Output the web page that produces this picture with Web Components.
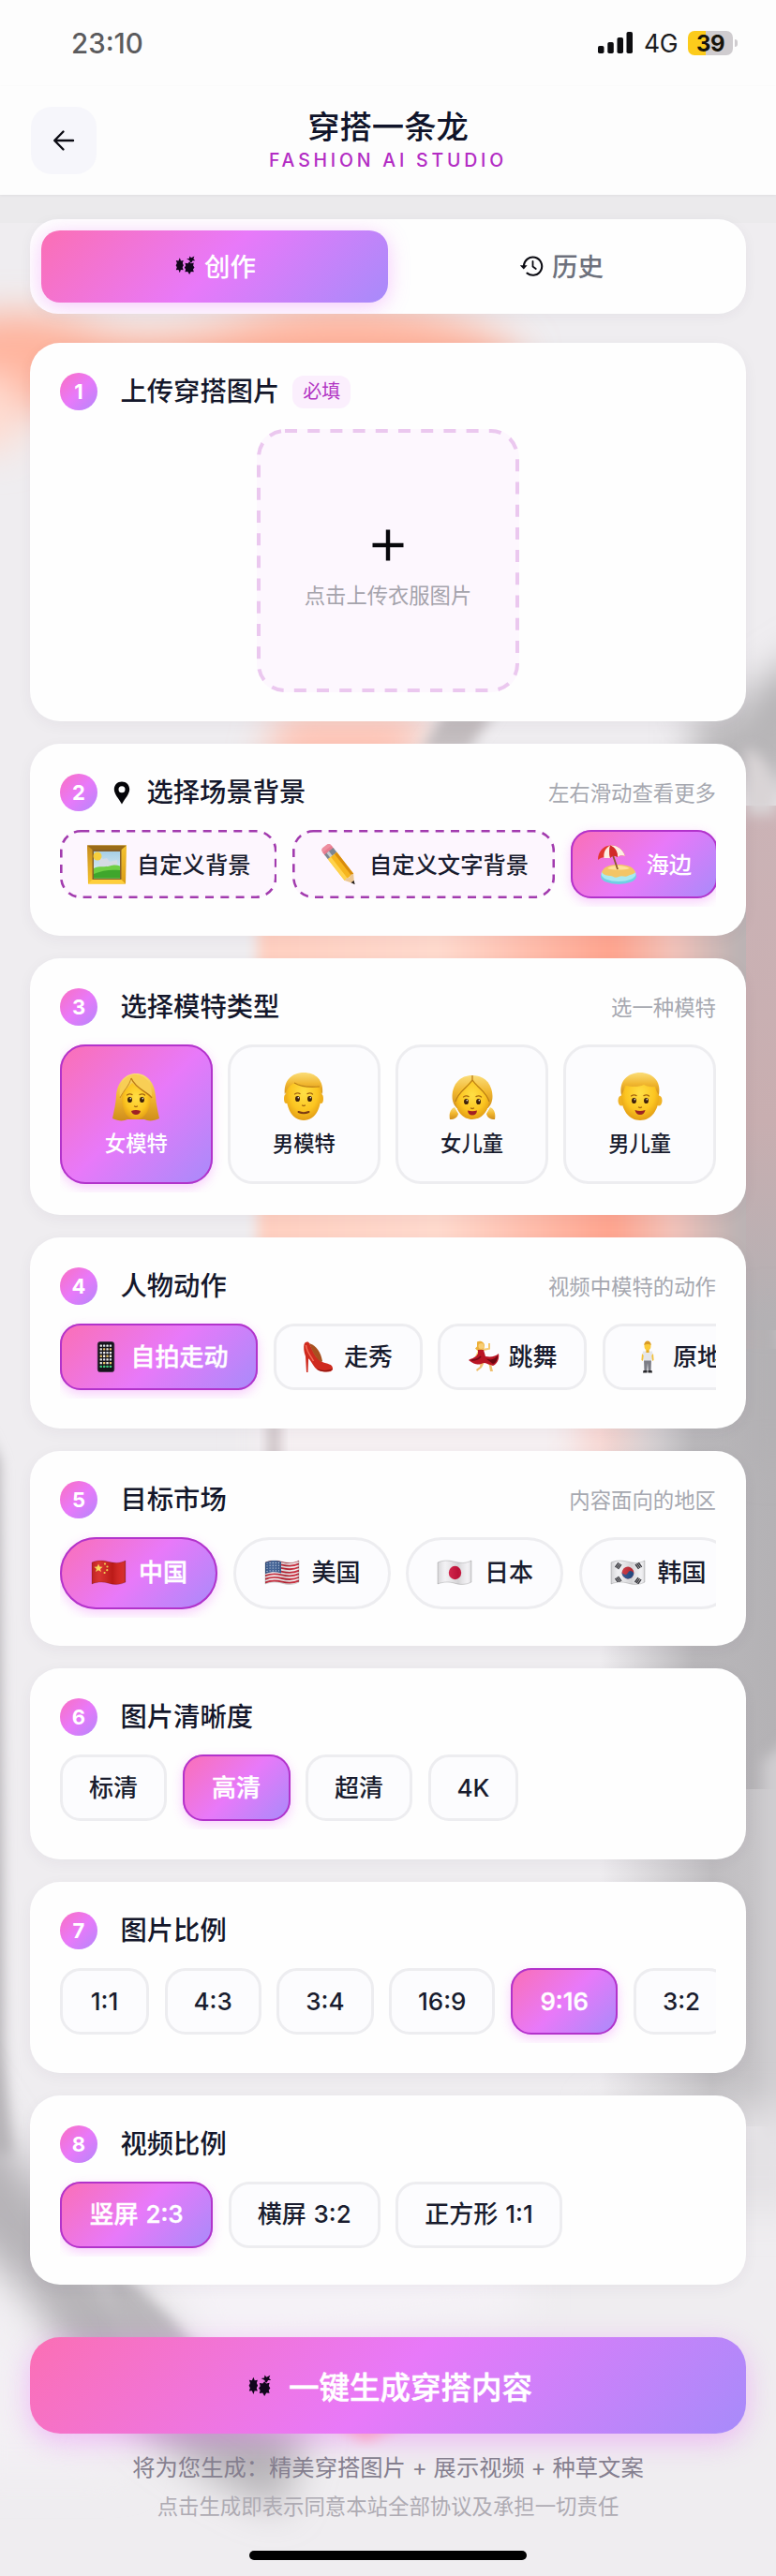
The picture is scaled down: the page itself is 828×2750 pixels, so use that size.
<!DOCTYPE html>
<html lang="zh-CN">
<head>
<meta charset="utf-8">
<title>穿搭一条龙</title>
<style>
html, body { margin: 0; padding: 0; }
body {
  width: 828px;
  height: 2750px;
  overflow: hidden;
  background: #efedf0;
  color: #14162b;
  font-family: Inter, "Noto Sans CJK SC", sans-serif;
  --grad: linear-gradient(135deg, #fb6fb4 0%, #e879f9 50%, #a78bfa 100%);
}
</style>
</head>
<body>

<studio-page>
  <soft-backdrop slot="backdrop"></soft-backdrop>

  <status-bar time="23:10" network="4G" battery="39"></status-bar>
  <page-header subtitle="FASHION AI STUDIO">穿搭一条龙</page-header>

  <main-tabs>
    <main-tab icon="sparkle" active>创作</main-tab>
    <main-tab icon="history">历史</main-tab>
  </main-tabs>

  <step-list>
    <step-card no="1" heading="上传穿搭图片" tag="必填" style="height:404px">
      <upload-box>点击上传衣服图片</upload-box>
    </step-card>

    <step-card no="2" icon="pin" heading="选择场景背景" hint="左右滑动查看更多" style="height:205px">
      <option-chip kind="scene" custom emoji="frame">自定义背景</option-chip>
      <option-chip kind="scene" custom emoji="pencil">自定义文字背景</option-chip>
      <option-chip kind="scene" emoji="beach" active>海边</option-chip>
    </step-card>

    <step-card no="3" heading="选择模特类型" hint="选一种模特" style="height:274px">
      <option-chip kind="tile" emoji="woman" active>女模特</option-chip>
      <option-chip kind="tile" emoji="man">男模特</option-chip>
      <option-chip kind="tile" emoji="girl">女儿童</option-chip>
      <option-chip kind="tile" emoji="boy">男儿童</option-chip>
    </step-card>

    <step-card no="4" heading="人物动作" hint="视频中模特的动作" style="height:203.5px">
      <option-chip emoji="phone" active>自拍走动</option-chip>
      <option-chip emoji="heel">走秀</option-chip>
      <option-chip emoji="dancer">跳舞</option-chip>
      <option-chip emoji="standing">原地</option-chip>
    </step-card>

    <step-card no="5" heading="目标市场" hint="内容面向的地区" style="height:208.5px">
      <option-chip kind="pill" emoji="cn" active>中国</option-chip>
      <option-chip kind="pill" emoji="us">美国</option-chip>
      <option-chip kind="pill" emoji="jp">日本</option-chip>
      <option-chip kind="pill" emoji="kr">韩国</option-chip>
    </step-card>

    <step-card no="6" heading="图片清晰度" style="height:204px">
      <option-chip>标清</option-chip>
      <option-chip active>高清</option-chip>
      <option-chip>超清</option-chip>
      <option-chip>4K</option-chip>
    </step-card>

    <step-card no="7" heading="图片比例" style="height:203.5px">
      <option-chip>1:1</option-chip>
      <option-chip>4:3</option-chip>
      <option-chip>3:4</option-chip>
      <option-chip>16:9</option-chip>
      <option-chip active>9:16</option-chip>
      <option-chip>3:2</option-chip>
    </step-card>

    <step-card no="8" heading="视频比例" style="height:202px">
      <option-chip active>竖屏 2:3</option-chip>
      <option-chip>横屏 3:2</option-chip>
      <option-chip>正方形 1:1</option-chip>
    </step-card>
  </step-list>

  <generate-bar>
    一键生成穿搭内容
    <span slot="note">将为您生成：精美穿搭图片 + 展示视频 + 种草文案</span>
    <span slot="terms">点击生成即表示同意本站全部协议及承担一切责任</span>
  </generate-bar>
</studio-page>

<script>
(function() {

// ---------- icons ----------
const ICONS = {
  back: '<svg viewBox="0 0 24 24" width="24" height="24" fill="none" stroke="#0c0c14" stroke-width="2.400" stroke-linecap="round" stroke-linejoin="round"><path d="M22 12H2.500M11.500 2.500L2.200 12l9.300 9.500"/></svg>',
  sparkle: '<svg viewBox="0 0 24 22" width="100%" height="100%" fill="#12061c"><path d="M5.200 2.500l1.300 3.500 3-.6-1 3.300 1.200 2.500-1.300 2.400 1 3.100-3-.3-1.200 3.600-1.500-3.500-2.900.3 1-3.200L.6 11.200l1.300-2.500L.8 5.500l2.900.5z"/><path d="M16.500 7l1.800 2 3.400-.7-.8 3.300 1.500 2.200-1.600 2.200.9 2.900-3.300-.3-1.900 3.400-1.900-3.200-3.300.3.800-3.100-1.500-2.200 1.600-2.100-.8-3.200 3.300.5z"/><path d="M17.500 7.800l-.8-2.200-3.600-1.900 3.200-.5.500-2.700 1.900 2 3.600-1.900-1.100 3.100 2 2-3 .1-1.300 2.400z"/></svg>',
  history: '<svg viewBox="0 0 26 24" width="26" height="24" fill="none" stroke="#0b0b12" stroke-width="2.100" stroke-linecap="round"><path d="M5 12.200A9.600 9.600 0 1 1 8.500 19.600"/><path d="M14.500 7v5.500l3.300 2.500" stroke-width="1.800"/><path d="M.8 11.200h7.800l-3.800 4.300z" fill="#0b0b12" stroke="none"/></svg>',
  pin: '<svg viewBox="0 0 18 25" width="18" height="25"><path fill="#050509" fill-rule="evenodd" d="M9 .5C4.200.5.800 4 .8 8.600c0 5.200 4.700 9.900 8.200 15.900 3.500-6 8.200-10.700 8.200-15.900C17.200 4 13.800.5 9 .5zM9 5.200a3.500 3.500 0 1 1 0 7 3.500 3.500 0 0 1 0-7z"/></svg>',
  plus: '<svg viewBox="0 0 34 34" width="34" height="34" stroke="#08080c" stroke-width="4.400"><path d="M17 .5v33M.5 17h33"/></svg>'
};

const FACE_DEFS = '<defs><radialGradient id="f" cx=".5" cy=".4" r=".65"><stop offset="0" stop-color="#ffdf45"/><stop offset=".6" stop-color="#fcc521"/><stop offset="1" stop-color="#dd9412"/></radialGradient>' +
  '<linearGradient id="h" x1="0" y1="0" x2="0" y2="1"><stop offset="0" stop-color="#fbdd78"/><stop offset=".5" stop-color="#f1b730"/><stop offset="1" stop-color="#cf8d1b"/></linearGradient></defs>';

// eyes, brows, nose; the mouth differs per face
function features(y, mouth) {
  return '<g fill="#40220b"><ellipse cx="19.500" cy="' + y + '" rx="2.500" ry="3.100"/><ellipse cx="32.500" cy="' + y + '" rx="2.500" ry="3.100"/></g>' +
    '<g fill="#fff"><circle cx="20.300" cy="' + (y - 1.2) + '" r=".8"/><circle cx="33.300" cy="' + (y - 1.2) + '" r=".8"/></g>' +
    '<g fill="none" stroke="#a8680f" stroke-width="1.300" stroke-linecap="round"><path d="M16.500 ' + (y - 5) + 'q3-2 5.500-.4M30 ' + (y - 5.4) + 'q3-1.600 5.500.4"/><path d="M24.500 ' + (y + 7) + 'q1.500 1 3 0"/></g>' + mouth;
}

// waving flag body with a shared fold shade
const WAVE = 'M2 7C8 4.500 13 4.500 20 6.200S32 8 38 5V28C32 31 26 31 20 29.200S8 27.600 2 30z';
function flag(id, art) {
  return '<svg viewBox="0 0 40 36" width="40" height="36"><defs><clipPath id="' + id + '"><path d="' + WAVE + '"/></clipPath>' +
    '<linearGradient id="' + id + 's"><stop offset="0" stop-color="#000" stop-opacity=".16"/><stop offset=".25" stop-color="#fff" stop-opacity=".1"/><stop offset=".6" stop-color="#000" stop-opacity=".12"/><stop offset=".85" stop-color="#fff" stop-opacity=".06"/><stop offset="1" stop-color="#000" stop-opacity=".25"/></linearGradient></defs>' +
    '<g clip-path="url(#' + id + ')">' + art + '<rect width="40" height="36" fill="url(#' + id + 's)"/></g><path d="' + WAVE + '" fill="none" stroke="#00000033" stroke-width=".8"/></svg>';
}

function usStripes() {
  let out = '<rect width="40" height="36" fill="#f5f1f2"/>';
  for (let i = 0; i < 7; i++) {
    const y = 6.8 + i * 3.6;
    out += '<path d="M2 ' + y + 'c6-2.500 11-2.500 18-.8s12 1.800 18-1.200" fill="none" stroke="#c62536" stroke-width="1.850"/>';
  }
  out += '<path d="M2 4h17v14.500C13 16.500 8 17 2 19z" fill="#34578f"/>';
  for (let r = 0; r < 4; r++) for (let c = 0; c < 5; c++) {
    out += '<circle cx="' + (4 + c * 3.1) + '" cy="' + (8 + r * 2.8 - (c > 0 ? .6 : 0)) + '" r=".6" fill="#dfe6f2"/>';
  }
  return out;
}

function phoneApps() {
  const cols = ['#f2f2ee', '#e8c56a', '#d7dfe8', '#f4efe3'];
  let out = '';
  for (let r = 0; r < 7; r++) for (let c = 0; c < 4; c++) {
    const fill = r === 6 ? '#3fca7b' : cols[(r * 3 + c * 2) % 4];
    out += '<rect x="' + (10.6 + c * 3.4) + '" y="' + (4.5 + r * 3.7) + '" width="2.300" height="2.300" rx=".5" fill="' + fill + '"/>';
  }
  return out;
}

const EMOJI = {
  frame: '<svg viewBox="0 0 44 44" width="44" height="44"><defs><linearGradient id="g" x1="0" y1="0" x2="1" y2="1"><stop offset="0" stop-color="#c58a1c"/><stop offset=".5" stop-color="#f3c02c"/><stop offset="1" stop-color="#d99a12"/></linearGradient><linearGradient id="s" x1="0" y1="0" x2="0" y2="1"><stop offset="0" stop-color="#a7cfe6"/><stop offset="1" stop-color="#e9f4f6"/></linearGradient></defs>' +
    '<path d="M1 1.500h42l-1 41H2z" fill="url(#g)"/><path d="M1 1.500h42l-6 5H7z" fill="#9a6b17"/><path d="M2 42.500h40l-5-5H7z" fill="#ffcf3b"/><path d="M6.500 6h31v32h-31z" fill="#85602a"/><path d="M8 8h28v28.500H8z" fill="url(#s)"/><path d="M14 14l4 2 4-1 3 4 8-2v8H14z" fill="#d5dbe4"/><circle cx="12" cy="13" r="4.500" fill="#f6cf3d"/><path d="M8 26c6-3 12-1 17-2.500s8-1 11 0v13H8z" fill="#6fcf45"/><path d="M8 32c9-4 18-5 28-4v8.500H8z" fill="#3fa62c"/></svg>',
  pencil: '<svg viewBox="0 0 44 44" width="44" height="44"><g transform="rotate(-38 22 22)"><rect x="16" y="-3" width="12" height="7" rx="3.500" fill="#ee8fa0"/><path d="M16 1h12v4H16z" fill="#e77b8f"/><path d="M16 4h12v6H16z" fill="#7d8690"/><path d="M19 4h3v6h-3z" fill="#c6ccd2"/><path d="M16 10h12v29H16z" fill="#f6b51e"/><path d="M16 10h4v29h-4z" fill="#ffd34d"/><path d="M25 10h3v29h-3z" fill="#d98c0c"/><path d="M16 39l6 9 6-9-3-1-3 1.500-3-1.500z" fill="#ecc793"/><path d="M20 45l2 4 2-4z" fill="#26211d"/></g></svg>',
  beach: '<svg viewBox="0 0 44 44" width="44" height="44"><ellipse cx="24" cy="34.500" rx="19" ry="8.500" fill="#6fd0e4"/><ellipse cx="24" cy="32" rx="18.500" ry="8" fill="#a9e9f0"/><path d="M6 30c3-7 10-8 18-8s16 2 18 8c-2 3-5 2-8 4s-6-1-10 1-6-1-9-1-7-1-9-4z" fill="#f3c566"/><path d="M12 26c5-4 17-4 24 0-6 2-18 2-24 0z" fill="#ffe09a"/><path d="M18 12l5 15" stroke="#8c5a2b" stroke-width="1.800"/><path d="M2 17C2 8 8 2 15 1.500 23 1 29 6 31 13c-3-1.500-6-1-8 1-3-2-6-1.500-8 1-4-2-10-1-13 2z" fill="#e2372f"/><path d="M15 1.500C9 5 8 10 8.500 15l6.500 0c-1-5-1-9 0-13.500zM15 1.500c6 2 8 7 8 12.500 2-2 5-2.500 8-1C29 6 23 1 15 1.500z" fill="#fdeee2"/><path d="M15 1.500c6 3 8 7 8 12.500-3-2-6-1.500-8 1-1-5-1-9 0-13.500z" fill="#d22a28"/></svg>',
  woman: '<svg viewBox="0 0 52 52" width="52" height="52">' + FACE_DEFS + '<path d="M26 1C14 1 6 11 5 25c-.5 9-2.500 16-4 24 6 3 12 3 16 1h18c4 2 10 2 16-1-1.500-8-3.500-15-4-24C46 11 38 1 26 1z" fill="url(#h)"/><path d="M11 24c2-4 7-8 11-13 6 6 12 9 19 11 2 15-4 28-15 28S11 39 11 24z" fill="url(#f)"/><path d="M21 6c-2 8-8 13-12 21C7 15 12 4 24 2c11 0 20 8 19 25-5-7-17-8-22-21z" fill="#f8ce55"/><path d="M21 6c5 12 17 14 22 21" fill="none" stroke="#bb7915" stroke-width="1.300"/><path d="M21 6c-2 8-8 13-12 21" fill="none" stroke="#c98a20" stroke-width="1"/>' +
    features(29, '<path d="M21 41q5-2 10 0-1 4-5 4t-5-4z" fill="#9e2126"/>') + '</svg>',
  man: '<svg viewBox="0 0 52 52" width="52" height="52">' + FACE_DEFS + '<ellipse cx="7.500" cy="28" rx="2.500" ry="5" fill="#efae1d"/><ellipse cx="44.500" cy="28" rx="2.500" ry="5" fill="#efae1d"/><path d="M7 20C7 8 14 2 26 2s19 6 19 18c0 17-6 31-19 31S7 37 7 20z" fill="url(#f)"/><path d="M6 24C4 9 13 0 26 0s22 8 20 24l-3-9c-9 1-19 0-26-4-6 2-9 6-11 13z" fill="url(#h)"/><path d="M16 11c7 4 18 5 27 4" fill="none" stroke="#bd8018" stroke-width="1.200"/>' +
    features(28, '<path d="M20.500 42q5.500 2.500 11 0" fill="none" stroke="#7b3a12" stroke-width="2" stroke-linecap="round"/>') + '</svg>',
  girl: '<svg viewBox="0 0 52 52" width="52" height="52">' + FACE_DEFS + '<path d="M7 37c-5 2-6 8-5 13 5 0 8-2 9-6zM45 37c5 2 6 8 5 13-5 0-8-2-9-6z" fill="url(#h)"/><path d="M26 3C13 3 5 12 4.500 25c0 6 2 10 5 13h33c3-3 5-7 5-13C47 12 39 3 26 3z" fill="url(#h)"/><path d="M8 29C10 19 19 16 26 7c7 9 16 12 18 22 0 12-8 21-18 21S8 41 8 29z" fill="url(#f)"/><path d="M26 3v5C20 17 11 20 8 31M26 8c6 9 15 12 18 23" fill="none" stroke="#bb7e18" stroke-width="1.300"/>' +
    features(31, '<path d="M21 40.500q5 1.500 10 0-.5 5-5 5t-5-5z" fill="#a11f24"/>') + '</svg>',
  boy: '<svg viewBox="0 0 52 52" width="52" height="52">' + FACE_DEFS + '<ellipse cx="6" cy="30" rx="3.500" ry="5.500" fill="#f0b223"/><ellipse cx="46" cy="30" rx="3.500" ry="5.500" fill="#f0b223"/><path d="M6 25C6 10 13 3 26 3s20 7 20 22c0 15-8 26-20 26S6 40 6 25z" fill="url(#f)"/><path d="M6 24C3 9 13 0 26 0s23 9 20 24c-2-3-3-5-4-9-6 1-10-1-12-2-6 3-14 2-20 1-1 4-2 7-4 10z" fill="url(#h)"/>' +
    features(30, '<path d="M20.500 40q5.500 2 11 0-1 5-5.500 5t-5.500-5z" fill="#9c2323"/>') + '</svg>',
  phone: '<svg viewBox="0 0 34 36" width="34" height="36"><rect x="8.300" y="1.500" width="17.500" height="32" rx="2.600" fill="#15131a" stroke="#3a2d40" stroke-width=".7"/>' + phoneApps() + '</svg>',
  heel: '<svg viewBox="0 0 34 36" width="34" height="36"><path d="M1.500 4C3 1 6 1 7 3c4 8 6 16 14 20 5 2 11 2 11 7 0 4-6 4-12 3C13 32 11 25 7 20c-1-1-1 0-1 2l-.5 12H4L3 17C1 12 .8 7 1.500 4z" fill="#cf2b1f"/><path d="M7 3c8 3 12 9 14 19l-1 1C13 19 10 11 7 3z" fill="#a8501f"/><path d="M3.500 5c1 8 5 11 8 17" fill="none" stroke="#f26d58" stroke-width="1.500"/><path d="M15 30c6 3 13 2 17 0-1 4-14 4.500-17 0z" fill="#8d150f"/></svg>',
  dancer: '<svg viewBox="0 0 34 36" width="34" height="36"><path d="M14 22l-1 6-4 3 1 2 5-4 3-6zM20 21l3 6 1 6h3l-2-8-3-5z" fill="#efbf6e"/><path d="M10 1.500c3-2 8 0 8 4l-1 5-6 1-3-3 2-2z" fill="#ecb03a"/><circle cx="14.500" cy="6" r="3" fill="#f8cd74"/><path d="M17 11l7-1.500V3h-2v5L15 9zM11 11l-3 6 2 1 4-5z" fill="#f5c971"/><path d="M11 10h6l2 7c6 1 11 0 14-3 1 5-1 11-6 13-4-1-7-3-10-3-4 2-9 3-16-3 2-2 4-1 6-3 2-1 3-2 4-4z" fill="#b91524"/><path d="M19 19c6 3 10 1 13-3 0 5-2 8-5 9z" fill="#6c0711"/><path d="M4 21c4 0 8-1 10-4" stroke="#760a15" stroke-width="1.500" fill="none"/></svg>',
  standing: '<svg viewBox="0 0 34 36" width="34" height="36"><path d="M13 20h8L20.500 34h-2.700L17 24l-.8 10h-2.700z" fill="#7c7d86"/><path d="M12.500 32h4v2.500h-4.500zM17.500 32h4l.5 2.500h-4.500z" fill="#28282c"/><path d="M12 11.500h10l1 9h-2v1h-8v-1h-2z" fill="#e4e5ea"/><path d="M11 14l-.6 7 1.600 1 .7-6zM23 14l.6 7-1.600 1-.7-6z" fill="#f2c13c"/><rect x="15.400" y="9" width="3.200" height="4" fill="#e6ab25"/><ellipse cx="17" cy="5.800" rx="3.500" ry="4.600" fill="#fbcb39"/><path d="M13.300 5c0-6 7.400-6 7.400 0-2-1.500-5.400-1.500-7.400 0z" fill="#d99b25"/></svg>',
  cn: flag('cn', '<rect width="40" height="36" fill="#d41e1b"/><path d="M9 8.500l1.300 3.100 3.300.1-2.600 2.200 1 3.200L9 15.200l-3 1.900 1-3.200-2.600-2.200 3.300-.1z" fill="#fbd84b"/><g fill="#fbd84b"><circle cx="16" cy="8.500" r="1.100"/><circle cx="18.500" cy="11.500" r="1.100"/><circle cx="18.300" cy="15.200" r="1.100"/><circle cx="15.600" cy="18" r="1.100"/></g>'),
  us: flag('us', usStripes()),
  jp: flag('jp', '<rect width="40" height="36" fill="#f1f0f3"/><ellipse cx="20.500" cy="18" rx="6.700" ry="7.200" fill="#d4143f"/>'),
  kr: flag('kr', '<rect width="40" height="36" fill="#efeff2"/><g transform="rotate(24 20 18)"><circle cx="20" cy="18" r="6.400" fill="#cd2e3a"/><path d="M13.600 18a3.200 3.200 0 0 0 6.400 0 3.200 3.200 0 0 1 6.400 0 6.400 6.400 0 0 1-12.800 0z" fill="#29518f"/></g><g stroke="#2b2b31" stroke-width="1.350"><path d="M6.500 12l3.500-4.800M8 13l3.500-4.800M9.500 14l3.500-4.800M28 9l3.500 4.800M29.600 8l3.500 4.800M31.200 7l3.500 4.800M6.500 24l3.500 4.800M8 23l3.500 4.800M9.500 22l3.500 4.800M27.500 28l3.500-4.800M29 29l3.500-4.800M30.600 30l3.500-4.800"/></g>')
};

// open shadow root filled from a markup string
function fill(el, html) {
  const template = document.createElement('template');
  template.innerHTML = html;
  el.attachShadow({mode: 'open'}).appendChild(template.content.cloneNode(true));
}

// dashed outline with its own dash rhythm, lies over the host's box
function dashes(w, color, radius, pattern) {
  return '<svg class="dash" width="100%" height="100%"><rect x="' + w / 2 + '" y="' + w / 2 + '" rx="' + radius + '" fill="none" stroke="' + color + '" stroke-width="' + w +
    '" stroke-dasharray="' + pattern + '" style="width:calc(100% - ' + w + 'px);height:calc(100% - ' + w + 'px)"/></svg>';
}

// ---------- page frame ----------
class StudioPage extends HTMLElement {
	constructor() {
    super();
    fill(this, `
<style>
:host { display: grid; width: 828px; height: 2750px; overflow: hidden; }
::slotted([slot=backdrop]), .content { grid-area: 1 / 1; }
.content { display: flex; flex-direction: column; min-width: 0; z-index: 1; }
</style>
<slot name="backdrop"></slot>
<div class="content"><slot></slot></div>`);
	}
}

// blurred photo-like backdrop behind the cards
class SoftBackdrop extends HTMLElement {
	constructor() {
    super();
    fill(this, `
<style>:host { display: block; height: 2750px; } svg { display: block; }</style>
<svg width="828" height="2750" viewBox="0 0 828 2750">
  <defs>
    <filter id="b8" x="-100%" y="-30%" width="300%" height="160%"><feGaussianBlur stdDeviation="7"/></filter>
    <filter id="b20" x="-60%" y="-60%" width="220%" height="220%"><feGaussianBlur stdDeviation="20"/></filter>
    <linearGradient id="peach"><stop offset="0" stop-color="#ffcfc0"/><stop offset=".35" stop-color="#ffdace"/><stop offset=".68" stop-color="#ffa48e"/><stop offset=".8" stop-color="#f2c3ba"/><stop offset=".92" stop-color="#bdb3b4"/><stop offset="1" stop-color="#b5b1b3"/></linearGradient>
    <linearGradient id="side"><stop offset="0" stop-color="#bdbbbe" stop-opacity="0"/><stop offset=".5" stop-color="#b9b7ba"/><stop offset="1" stop-color="#b3b1b4"/></linearGradient>
    <linearGradient id="lower"><stop offset="0" stop-color="#c4c2c5" stop-opacity="0"/><stop offset=".6" stop-color="#bfbdc0"/><stop offset="1" stop-color="#cbc9cc"/></linearGradient>
    <linearGradient id="fade" x1="0" y1="0" x2="0" y2="1"><stop offset="0" stop-color="#cbb3b6"/><stop offset=".6" stop-color="#c8aeb0"/><stop offset="1" stop-color="#b3b1b4"/></linearGradient>
  </defs>
  <rect width="828" height="2750" fill="#efedf0"/>
  <rect y="208" width="828" height="30" fill="#ebeaec"/>
  <g filter="url(#b20)">
    <path d="M-60 350C0 325 60 335 100 350S200 360 270 340 480 320 560 380L520 440H-20L-60 400z" fill="#ffb29b"/>
    <path d="M-60 400H20V480H-60z" fill="#ffdcd0"/>
    <path d="M870 690L810 730 780 770 790 840H870z" fill="#b0afb1"/>
    <path d="M300 760H460L430 830H280z" fill="#ffc4b5"/>
    <path d="M740 760H860V840H740z" fill="#b8b6b8"/>
  </g>
  <path d="M475 758L530 758 500 800H450z" fill="#c2bcbe" filter="url(#b8)"/>
  <path d="M275 900H830V1500H275z" fill="url(#peach)" filter="url(#b8)"/>
  <path d="M280 1440H740V1600H280z" fill="#f6f0f2" filter="url(#b20)"/>
  <path d="M620 1490H680V1570H620z" fill="#f8d3ce" filter="url(#b20)"/>
  <rect x="287" y="1500" width="10" height="70" fill="#bfb3b6" filter="url(#b8)"/>
  <rect x="640" y="1440" width="200" height="480" fill="url(#side)"/>
  <rect x="640" y="1910" width="200" height="360" fill="url(#lower)"/>
  <rect x="796" y="860" width="50" height="560" fill="url(#fade)"/>
  <rect x="800" y="1400" width="50" height="160" fill="#b3b1b4" filter="url(#b20)"/>
  <path d="M795 800C812 800 822 820 828 850V870H795z" fill="#d9d4d6" filter="url(#b8)"/>
  <path d="M814 1880L850 1850V2300H814z" fill="#cfcdd0" filter="url(#b8)"/>
  <rect x="640" y="2250" width="230" height="110" fill="#e4e2e5" filter="url(#b20)"/>
  <path d="M-30 1500L0 1560 4 2180 12 2300H-30z" fill="#b5b2b6" filter="url(#b8)"/>
  <path d="M-60 2180C-10 2260 70 2400 180 2490 220 2540 270 2590 330 2590L300 2680C190 2640 80 2540 30 2450L-60 2360z" fill="#b6b3b7" filter="url(#b20)"/>
  <path d="M-40 2440C20 2480 60 2540 140 2640L-40 2640z" fill="#f3f0f4" filter="url(#b20)"/>
  <path d="M110 2420C150 2440 190 2480 220 2520H130z" fill="#bab7bb" filter="url(#b8)"/>
  <path d="M155 2400H560V2470L230 2520C210 2470 190 2440 155 2400z" fill="#f5f2f7" filter="url(#b20)"/>
  <path d="M340 2580H450L390 2606z" fill="#ffb4b4" filter="url(#b8)"/>
</svg>`);
	}
}

class StatusBar extends HTMLElement {
	constructor() {
    super();
    const level = this.getAttribute('battery');
    fill(this, `
<style>
:host { display: flex; align-items: center; justify-content: space-between; box-sizing: border-box;
  height: 92px; padding: 0 41px 1px 76px; background: #fdfdfd; }
.time { font-size: 29.500px; font-weight: 500; color: #5b5b5d; }
.right { display: flex; align-items: center; }
.net { font-size: 26.500px; color: #1b1b1d; margin: 0 11px 0 11px; letter-spacing: -.5px; }
.cell { width: 48px; height: 26px; border-radius: 7px; text-align: center; line-height: 27px;
  font-size: 24px; font-weight: 700; color: #17140a; letter-spacing: -.5px;
  background: linear-gradient(90deg, #fccb1b 39%, #cfcccf 39%); }
.nub { width: 3px; height: 8px; margin-left: 2px; border-radius: 0 3px 3px 0; background: #cfcccf; }
</style>
<span class="time">${this.getAttribute('time')}</span>
<div class="right">
  <svg width="38" height="24" viewBox="0 0 38 24" fill="#0d0d10"><rect x="0" y="15" width="6.500" height="8" rx="1.800"/><rect x="10.300" y="11" width="6.500" height="12" rx="1.800"/><rect x="20.500" y="6" width="6.500" height="17" rx="1.800"/><rect x="30.500" y="0" width="6.500" height="23" rx="1.800"/></svg>
  <span class="net">${this.getAttribute('network')}</span>
  <span class="cell">${level}</span><span class="nub"></span>
</div>`);
	}
}

class PageHeader extends HTMLElement {
	constructor() {
    super();
    fill(this, `
<style>
:host { display: grid; grid-template-columns: 70px 1fr 70px; align-items: center; box-sizing: border-box;
  height: 116px; padding: 0 33px 1px; background: #fdfdfd; box-shadow: 0 1px 3px rgba(40, 30, 50, .06); }
.back { display: grid; place-items: center; width: 70px; height: 72px; border-radius: 22px; background: #f6f6fb; }
.titles { display: flex; flex-direction: column; align-items: center; gap: 6px; padding-bottom: 1px; }
h1 { margin: 0; font-size: 34.300px; line-height: 38px; font-weight: 500; color: #10142a; }
.sub { font-size: 19.500px; line-height: 20px; font-weight: 500; letter-spacing: 3.800px; color: #b32cc4; }
</style>
<div class="back">${ICONS.back}</div>
<div class="titles"><h1><slot></slot></h1><span class="sub">${this.getAttribute('subtitle')}</span></div>`);
	}
}

// ---------- tabs ----------
class MainTabs extends HTMLElement {
	constructor() {
    super();
    fill(this, `
<style>
:host { display: grid; grid-template-columns: 1fr 1fr; gap: 0; box-sizing: border-box; height: 101px;
  margin: 26px 32px 0; padding: 12px; border-radius: 30px; background: #fefefe; overflow: hidden;
  box-shadow: 0 3px 14px rgba(60, 40, 70, .05); }
</style>
<slot></slot>`);
	}
}

class MainTab extends HTMLElement {
	constructor() {
    super();
    fill(this, `
<style>
:host { display: flex; align-items: center; justify-content: center; box-sizing: border-box; padding-bottom: 3px; border-radius: 20px;
  font-size: 27.500px; font-weight: 500; color: #6d717c; }
:host([active]) { background: var(--grad); color: #fff; box-shadow: 0 4px 22px rgba(232, 100, 249, .35); }
.ico { display: flex; margin: 2px 9px 0 0; }
:host([active]) .ico { width: 22px; height: 20px; margin: 0 9px 0 2px; }
</style>
<span class="ico">${ICONS[this.getAttribute('icon')]}</span><slot></slot>`);
	}
}

// ---------- cards ----------
class StepList extends HTMLElement {
	constructor() {
    super();
    fill(this, `
<style>:host { display: flex; flex-direction: column; gap: 24px; margin: 31px 32px 0; }</style>
<slot></slot>`);
	}
}

class StepCard extends HTMLElement {
	constructor() {
    super();
    const icon = this.getAttribute('icon');
    const tag = this.getAttribute('tag');
    fill(this, `
<style>
:host { display: block; box-sizing: border-box; padding: 32px 32px 0; border-radius: 32px; background: #fefefe;
  box-shadow: 0 4px 16px rgba(60, 40, 70, .05); }
header { display: flex; align-items: center; height: 40px; }
.no { display: grid; place-items: center; width: 40px; height: 40px; border-radius: 50%;
  background: linear-gradient(135deg, #fb6fc0, #e879f9 50%, #b487fb); color: #fff; font-size: 22px; font-weight: 700; }
.lead { display: flex; width: 24.500px; }
.lead.has { width: 35.500px; box-sizing: content-box; padding-left: 17px; }
h2 { margin: 0; font-size: 28.300px; line-height: 40px; font-weight: 500; color: #14172b; }
.tag { margin-left: 14px; padding: 0 11px; height: 35px; line-height: 34px; border-radius: 12px; background: #fbeffd; color: #b135c3; font-size: 20px; font-weight: 400; }
.hint { margin-left: auto; padding-bottom: 2px; font-size: 22.400px; color: #a6a8b0; }
/* the row scrolls sideways, so its ends are clipped; padding leaves room for the glow */
.row { display: flex; gap: 16.500px; margin-top: 12px; padding: 8px 0 9px; overflow: hidden; }
</style>
<header>
  <span class="no">${this.getAttribute('no')}</span>
  <span class="lead ${icon ? 'has' : ''}">${icon ? ICONS[icon] : ''}</span>
  <h2>${this.getAttribute('heading')}</h2>
  ${tag ? '<span class="tag">' + tag + '</span>' : ''}
  <span class="hint">${this.getAttribute('hint') || ''}</span>
</header>
<div class="row"><slot></slot></div>`);
	}
}

class UploadBox extends HTMLElement {
	constructor() {
    super();
    fill(this, `
<style>
:host { display: flex; position: relative; flex-direction: column; align-items: center; box-sizing: border-box; width: 280px; height: 281px;
  margin: 0 auto; padding-top: 107px; border-radius: 30px; background: #fdf7fe; }
.txt { margin-top: 21px; font-size: 22.300px; line-height: 32px; color: #a5a3ac; }
svg { flex: none; }
.dash { position: absolute; inset: 0; }
</style>
${dashes(4, '#ebc8ef', 28, '13 11.2')}
${ICONS.plus}<span class="txt"><slot></slot></span>`);
	}
}

class OptionChip extends HTMLElement {
	constructor() {
    super();
    const emoji = this.getAttribute('emoji');
    fill(this, `
<style>
:host { display: flex; position: relative; flex: none; align-items: center; justify-content: center; box-sizing: border-box; height: 71px; min-width: 95px; padding: 0 28px;
  border: 3px solid #ededf0; border-radius: 22px; background: #fcfcfe; color: #191c2e;
  font-size: 26px; font-weight: 500; line-height: 36px; white-space: nowrap; word-spacing: 1px; }
:host([emoji]) { padding: 0 28.500px; }
.art { display: flex; flex: none; margin-right: 10px; }
:host([kind=scene]) { height: 73px; padding: 0 25px; font-size: 24.300px; }
:host([kind=scene]:not([custom])) { padding-left: 24px; }
:host([custom]) { border-color: transparent; background: #fdf6fe border-box; }
.dash { position: absolute; inset: -3px; width: calc(100% + 6px); height: calc(100% + 6px); }
:host([kind=pill]) { height: 77px; padding: 0 29px; border-radius: 39px; }
:host([kind=pill]) .art { margin-right: 12px; }
:host([kind=tile]) { width: calc((100% - 49.500px) / 4); flex-direction: column; justify-content: flex-start; height: 149px; padding: 27px 0 0;
  border-radius: 27px; font-size: 22.300px; line-height: 32px; }
:host([kind=tile]) .art { margin: 0 0 8px; }
:host([active]) { border-color: transparent; outline: 2px solid #b233cb; outline-offset: -2px; background: var(--grad) border-box; color: #fff;
  box-shadow: 0 4px 12px rgba(232, 80, 249, .28); -webkit-text-stroke: .4px #fff; }
:host([active]:not([emoji])) { padding: 0 28.500px; }
:host([active][kind=tile]), :host([active][kind=scene]) { -webkit-text-stroke: 0; }
</style>
${this.hasAttribute('custom') ? dashes(2.6, '#a23bae', 21, '9 7.3') : ''}
${emoji ? '<span class="art">' + EMOJI[emoji] + '</span>' : ''}<span><slot></slot></span>`);
	}
}

// ---------- bottom ----------
class GenerateBar extends HTMLElement {
	constructor() {
    super();
    fill(this, `
<style>
:host { display: flex; flex-direction: column; align-items: center; margin: 56px 32px 0; }
.btn { display: flex; align-items: center; justify-content: center; align-self: stretch; height: 103px; border-radius: 32px;
  background: var(--grad); box-shadow: 0 8px 30px rgba(232, 100, 249, .38); color: #fff; font-size: 32.500px; font-weight: 500; -webkit-text-stroke: .5px #fff; }
.ico { width: 25px; height: 23px; margin: 0 18px 0 5px; display: flex; }
.note { margin-top: 18px; font-size: 24.300px; line-height: 36px; color: #857f8f; }
.terms { margin-top: 7px; font-size: 22.400px; line-height: 34px; color: #aeabb3; }
.home { width: 296px; height: 10px; margin-top: 30px; border-radius: 5px; background: #000; }
</style>
<div class="btn"><span class="ico">${ICONS.sparkle}</span><slot></slot></div>
<div class="note"><slot name="note"></slot></div>
<div class="terms"><slot name="terms"></slot></div>
<div class="home"></div>`);
	}
}

window.customElements.define('studio-page', StudioPage);
window.customElements.define('soft-backdrop', SoftBackdrop);
window.customElements.define('status-bar', StatusBar);
window.customElements.define('page-header', PageHeader);
window.customElements.define('main-tabs', MainTabs);
window.customElements.define('main-tab', MainTab);
window.customElements.define('step-list', StepList);
window.customElements.define('step-card', StepCard);
window.customElements.define('upload-box', UploadBox);
window.customElements.define('option-chip', OptionChip);
window.customElements.define('generate-bar', GenerateBar);
})();
</script>
</body>
</html>
